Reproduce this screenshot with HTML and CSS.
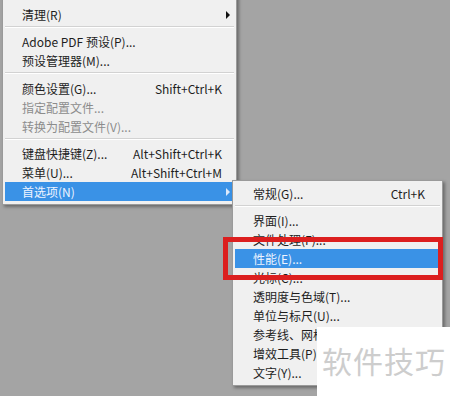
FILE: index.html
```html
<!DOCTYPE html>
<html lang="zh-CN">
<head>
<meta charset="utf-8">
<title>首选项菜单</title>
<link rel="stylesheet" href="styles.css">
</head>
<body>
<div class="stage">
  <div class="menu main-menu">
    <div class="item"><span class="label">清理(R)</span><span class="arrow"></span></div>
    <div class="sep"></div>
    <div class="item"><span class="label">Adobe PDF 预设(P)...</span></div>
    <div class="item"><span class="label">预设管理器(M)...</span></div>
    <div class="sep"></div>
    <div class="item"><span class="label">颜色设置(G)...</span><span class="key">Shift+Ctrl+K</span></div>
    <div class="item disabled"><span class="label">指定配置文件...</span></div>
    <div class="item disabled"><span class="label">转换为配置文件(V)...</span></div>
    <div class="sep"></div>
    <div class="item"><span class="label">键盘快捷键(Z)...</span><span class="key">Alt+Shift+Ctrl+K</span></div>
    <div class="item"><span class="label">菜单(U)...</span><span class="key">Alt+Shift+Ctrl+M</span></div>
    <div class="item active"><span class="label">首选项(N)</span><span class="arrow"></span></div>
  </div>

  <div class="menu sub-menu">
    <div class="item"><span class="label">常规(G)...</span><span class="key">Ctrl+K</span></div>
    <div class="sep"></div>
    <div class="item"><span class="label">界面(I)...</span></div>
    <div class="item"><span class="label">文件处理(F)...</span></div>
    <div class="item active"><span class="label">性能(E)...</span></div>
    <div class="item"><span class="label">光标(C)...</span></div>
    <div class="item"><span class="label">透明度与色域(T)...</span></div>
    <div class="item"><span class="label">单位与标尺(U)...</span></div>
    <div class="item"><span class="label">参考线、网格和切片(S)...</span></div>
    <div class="item"><span class="label">增效工具(P)...</span></div>
    <div class="item"><span class="label">文字(Y)...</span></div>
  </div>

  <div class="highlight-box"></div>
  <div class="watermark">软件技巧</div>
</div>
</body>
</html>
```

FILE: styles.css
```css
html, body {
  margin: 0;
  padding: 0;
}

body {
  background: #a4a4a4;
  font-family: "Noto Sans CJK SC", "Noto Sans", sans-serif;
  font-size: 12px;
  color: #1e1e1e;
  width: 450px;
  height: 396px;
  overflow: hidden;
}

.stage {
  position: relative;
  width: 450px;
  height: 396px;
  overflow: hidden;
}

.menu {
  background: #f0f0f0;
  border: 1px solid #9a9a9a;
  box-shadow: 2px 2px 3px rgba(0, 0, 0, 0.35);
  box-sizing: border-box;
  display: flex;
  flex-direction: column;
  padding: 2px;
}

.main-menu {
  width: 235px;
  margin-left: 2px;
  margin-top: -6px;
  padding-top: 9.5px;
  padding-bottom: 2.5px;
}

.sub-menu {
  position: absolute;
  left: 232px;
  top: 180px;
  width: 211px;
  padding-top: 2.5px;
  padding-bottom: 3px;
}

.item {
  display: flex;
  align-items: center;
  height: 19px;
  line-height: 19px;
  padding-left: 17px;
  white-space: nowrap;
}

.sub-menu .item {
  padding-left: 18px;
}

.item .key {
  margin-left: auto;
  padding-right: 12px;
}

.sub-menu .item .key {
  padding-right: 15px;
}

.item .arrow {
  margin-left: auto;
  width: 12px;
  height: 19px;
  position: relative;
}

.item .arrow::after {
  content: "";
  position: absolute;
  left: 4px;
  top: 6px;
  border-style: solid;
  border-width: 4px 0 4px 4px;
  border-color: transparent transparent transparent #111;
}

.item.active {
  background: #3a92e6;
  color: #eef4ff;
}

.item.active .arrow::after {
  border-left-color: #dbe9fb;
}

.item.disabled {
  color: #8c8c8c;
}

.sep {
  height: 8.5px;
  position: relative;
  box-sizing: border-box;
}

.sep::before {
  content: "";
  position: absolute;
  left: 0;
  right: 0;
  top: 2px;
  height: 1px;
  background: #d2d2d2;
  border-bottom: 1px solid #ffffff;
}

.highlight-box {
  position: absolute;
  left: 223px;
  top: 237px;
  width: 220px;
  height: 43px;
  box-sizing: border-box;
  border: 5px solid #dc1f1f;
}

.watermark {
  position: absolute;
  left: 317px;
  top: 327px;
  width: 133px;
  height: 69px;
  background: #ffffff;
  color: #cdcdcd;
  font-size: 30px;
  line-height: 30px;
  letter-spacing: 1px;
  padding: 18px 0 0 5px;
  box-sizing: border-box;
  white-space: nowrap;
}
```
